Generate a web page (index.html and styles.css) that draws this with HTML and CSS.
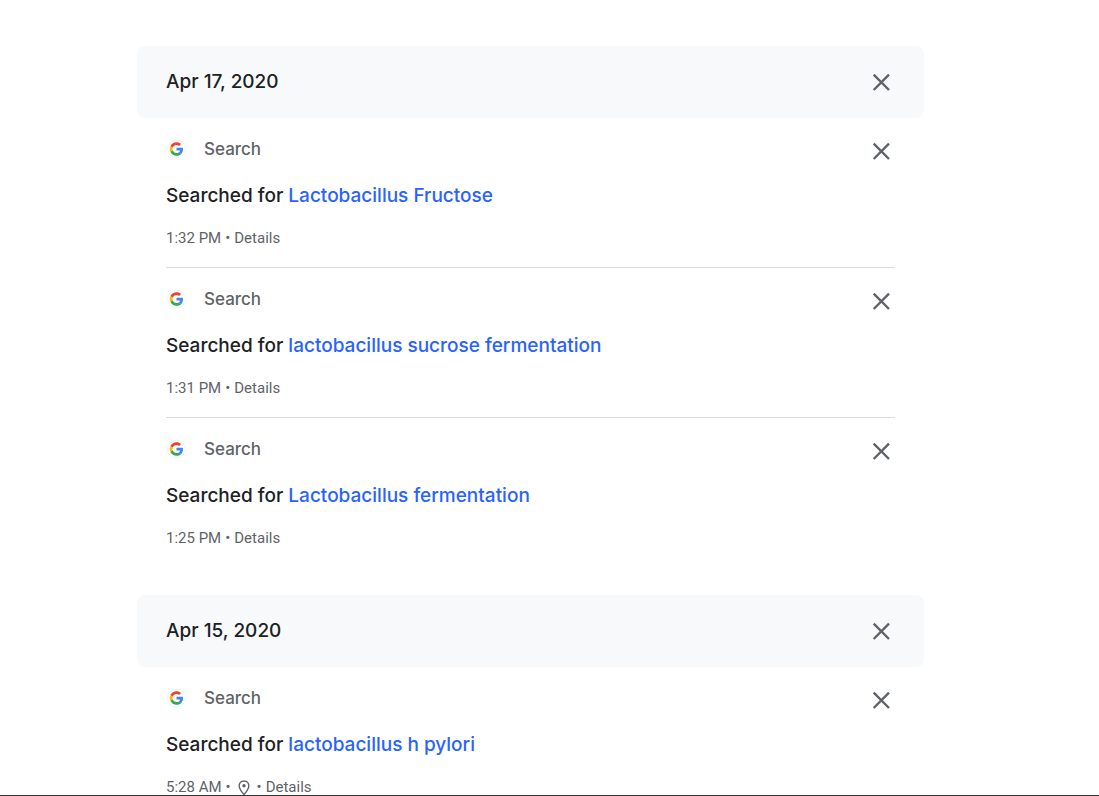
FILE: index.html
```html
<!DOCTYPE html>
<html lang="en">
<head>
<meta charset="utf-8">
<title>My Activity</title>
<link rel="stylesheet" href="styles.css">
</head>
<body>
<svg class="defs" aria-hidden="true">
  <symbol id="close" viewBox="0 0 28 28"><path d="M6.700 6.700l15.300 15.300M22 6.700l-15.300 15.300" fill="none" stroke="#5f6368" stroke-width="2.4"/></symbol>
  <symbol id="google" viewBox="0 0 20 20">
    <circle cx="10.500" cy="10" r="9" fill="#fff" stroke="#f1f3f4"/>
    <g transform="translate(3.700 3.200) scale(.283)">
      <path fill="#ea4335" d="M24 9.5c3.54 0 6.71 1.22 9.21 3.6l6.85-6.85C35.9 2.38 30.47 0 24 0 14.62 0 6.51 5.38 2.56 13.22l7.98 6.19C12.43 13.72 17.74 9.5 24 9.5z"/>
      <path fill="#4285f4" d="M46.98 24.55c0-1.57-.15-3.09-.38-4.55H24v9.02h12.94c-.58 2.96-2.26 5.48-4.78 7.18l7.73 6c4.51-4.18 7.09-10.36 7.09-17.65z"/>
      <path fill="#fbbc05" d="M10.53 28.59A14.5 14.5 0 0 1 9.77 24c0-1.6.27-3.14.76-4.59l-7.98-6.19A23.9 23.9 0 0 0 0 24c0 3.88.92 7.54 2.56 10.78z"/>
      <path fill="#34a853" d="M24 48c6.48 0 11.93-2.13 15.89-5.81l-7.73-6c-2.15 1.45-4.92 2.3-8.16 2.3-6.26 0-11.57-4.22-13.47-9.91l-7.98 6.19C6.51 42.62 14.62 48 24 48z"/>
    </g>
  </symbol>
</svg>
<main class="feed">
  <section class="day">
    <header class="day-header">
      <h2 class="date">Apr 17, 2020</h2>
      <button class="close" aria-label="Delete activity from Apr 17, 2020"><svg class="close-icon"><use href="#close"/></svg></button>
    </header>
    <article class="item">
      <div class="content">
        <div class="product"><svg class="logo"><use href="#google"/></svg><span>Search</span></div>
        <p class="title">Searched for <a class="query" href="#">Lactobacillus Fructose</a></p>
        <div class="meta"><span>1:32 PM</span><span>•</span><a class="details" href="#">Details</a></div>
      </div>
      <button class="close" aria-label="Delete activity item"><svg class="close-icon"><use href="#close"/></svg></button>
    </article>
    <article class="item">
      <div class="content">
        <div class="product"><svg class="logo"><use href="#google"/></svg><span>Search</span></div>
        <p class="title">Searched for <a class="query" href="#">lactobacillus sucrose fermentation</a></p>
        <div class="meta"><span>1:31 PM</span><span>•</span><a class="details" href="#">Details</a></div>
      </div>
      <button class="close" aria-label="Delete activity item"><svg class="close-icon"><use href="#close"/></svg></button>
    </article>
    <article class="item">
      <div class="content">
        <div class="product"><svg class="logo"><use href="#google"/></svg><span>Search</span></div>
        <p class="title">Searched for <a class="query" href="#">Lactobacillus fermentation</a></p>
        <div class="meta"><span>1:25 PM</span><span>•</span><a class="details" href="#">Details</a></div>
      </div>
      <button class="close" aria-label="Delete activity item"><svg class="close-icon"><use href="#close"/></svg></button>
    </article>
  </section>
  <section class="day">
    <header class="day-header">
      <h2 class="date">Apr 15, 2020</h2>
      <button class="close" aria-label="Delete activity from Apr 15, 2020"><svg class="close-icon"><use href="#close"/></svg></button>
    </header>
    <article class="item">
      <div class="content">
        <div class="product"><svg class="logo"><use href="#google"/></svg><span>Search</span></div>
        <p class="title">Searched for <a class="query" href="#">lactobacillus h pylori</a></p>
        <div class="meta"><span>5:28 AM</span><span>•</span><svg class="pin" viewBox="3 1 12 16" role="img" aria-label="Location"><path d="M9 3C6.200 3 4.200 5 4.200 7.700 4.200 11.200 9 16.500 9 16.500s4.800-5.300 4.800-8.800C13.800 5 11.800 3 9 3z" fill="none" stroke="#5f6368" stroke-width="1.4"/><circle cx="9" cy="7.700" r="1.700" fill="#5f6368"/></svg><span>•</span><a class="details" href="#">Details</a></div>
      </div>
      <button class="close" aria-label="Delete activity item"><svg class="close-icon"><use href="#close"/></svg></button>
    </article>
  </section>
</main>
<div class="bottom-edge"></div>
</body>
</html>
```
FILE: styles.css
```css
* {
  box-sizing: border-box;
}

body {
  margin: 0;
  height: 100vh;
  display: flex;
  flex-direction: column;
  overflow: hidden;
  background: #fff;
  color: #202124;
  font-family: "Roboto", sans-serif;
}

.defs {
  position: absolute;
  width: 0;
  height: 0;
}

.feed {
  flex: 1;
  min-height: 0;
  overflow: hidden;
  padding: 46px 175px 0 137px;
  display: flex;
  flex-direction: column;
  gap: 28px;
}

.day {
  flex: none;
}

.day-header {
  display: flex;
  align-items: center;
  justify-content: space-between;
  padding: 22px 29px;
  border-radius: 8px;
  background: #f8f9fb;
}

.date,
.title {
  margin: 0;
  font-family: "Inter", sans-serif;
  font-size: 19px;
  font-weight: 500;
  line-height: 28px;
}

.close {
  display: block;
  flex: none;
  padding: 0;
  border: 0;
  background: none;
}

.close-icon {
  display: block;
  width: 28px;
  height: 28px;
}

.item {
  display: flex;
  align-items: flex-start;
  justify-content: space-between;
  margin: 0 29px;
  padding: 19px 0 21px;
}

.item + .item {
  border-top: 1px solid #dadce0;
}

.title {
  margin: 21px 0 20px;
}

.product {
  display: flex;
  align-items: center;
  gap: 18px;
  color: #5f6368;
  font-family: "Inter", sans-serif;
  font-size: 17px;
  font-weight: 500;
  line-height: 24px;
}

.logo {
  width: 20px;
  height: 20px;
}

.query {
  color: #2962ff;
  text-decoration: none;
}

.meta {
  display: flex;
  align-items: center;
  gap: 4px;
  color: #5f6368;
  font-size: 15px;
  line-height: 16px;
}

.pin {
  width: 12px;
  height: 16px;
  margin: 0 3px;
}

.details {
  color: inherit;
  text-decoration: none;
}

.bottom-edge {
  flex: none;
  height: 1px;
  background: #303030;
}
```
